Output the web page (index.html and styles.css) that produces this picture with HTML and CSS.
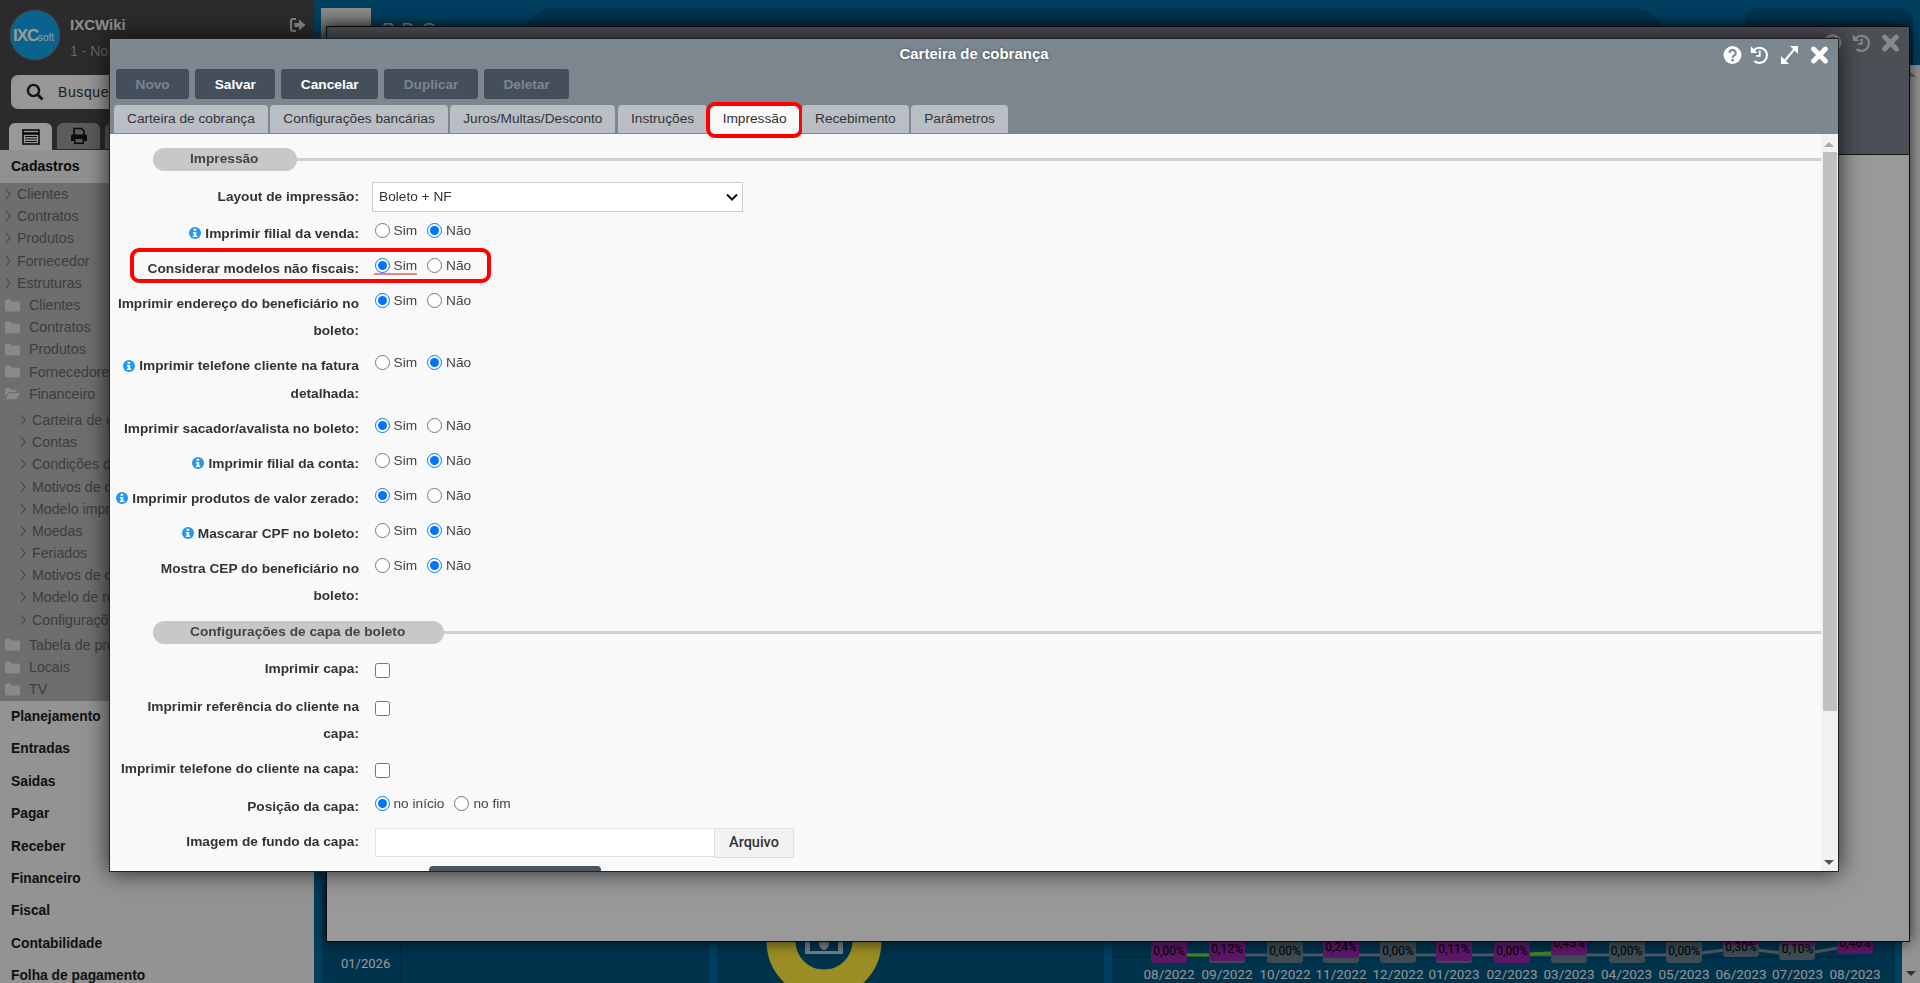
FILE: index.html
```html
<!DOCTYPE html>
<html lang="pt-BR">
<head>
    <meta charset="UTF-8">
    <title>IXCWiki</title>
    <link rel="stylesheet" href="styles.css">
</head>
<body>
    <svg class="icon-defs" width="0" height="0">
        <symbol id="i-info" viewBox="0 0 12 12">
            <circle cx="6" cy="6" r="6" fill="#2196f3"/>
            <rect x="4.6" y="1.8" width="2.6" height="2" fill="#fff"/>
            <path d="M3.9 5h3.3v3.6h1v1.4H3.9V8.6h1V6.4h-1z" fill="#fff"/>
        </symbol>
        <symbol id="i-angle" viewBox="0 0 6 12">
            <path d="M1 1l4 5-4 5" fill="none" stroke="currentColor" stroke-width="1.2"/>
        </symbol>
        <symbol id="i-folder" viewBox="0 0 15 13">
            <path d="M0 2q0-1.500 1.500-1.500h3.500l1.500 2h7q1.500 0 1.500 1.500v7q0 1.500-1.500 1.500h-12q-1.500 0-1.500-1.500z" fill="currentColor"/>
        </symbol>
        <symbol id="i-folder-open" viewBox="0 0 16 13">
            <path d="M0 2q0-1.500 1.500-1.500h3l1.500 2h5q1.500 0 1.500 1.500v.8H4L0 10z" fill="currentColor"/>
            <path d="M4.500 6h11.500l-3.500 6.500H0.800z" fill="currentColor"/>
        </symbol>
        <symbol id="i-question" viewBox="0 0 18 18">
            <circle cx="9" cy="9" r="8.500" fill="currentColor"/>
            <path d="M6.200 7a2.900 2.900 0 1 1 4.500 2.400c-1 .7-1.600 1.100-1.600 2.200" fill="none" stroke="#7d8790" stroke-width="2.100"/>
            <rect x="7.900" y="12.600" width="2.400" height="2.400" fill="#7d8790"/>
        </symbol>
        <symbol id="i-history" viewBox="0 0 18 18">
            <path d="M3.800 4.200A7.200 7.200 0 1 1 4.200 14.800" fill="none" stroke="currentColor" stroke-width="2"/>
            <path d="M0.800 0.800l6.200 6.200H0.800z" fill="currentColor"/>
            <path d="M9.200 4.800v5h-3.400" fill="none" stroke="currentColor" stroke-width="1.800"/>
        </symbol>
        <symbol id="i-expand" viewBox="0 0 18 20">
            <path d="M3.500 16.500L14.500 3.500" fill="none" stroke="currentColor" stroke-width="2"/>
            <path d="M9.500 1h8v8zM0.500 11v8h8z" fill="currentColor"/>
        </symbol>
        <symbol id="i-close" viewBox="0 0 16 16">
            <path d="M3 3l10 10M13 3L3 13" fill="none" stroke="currentColor" stroke-width="4.200" stroke-linecap="round"/>
        </symbol>
    </svg>

    <!-- sidebar -->
    <aside class="sidebar">
        <div class="brand">
            <svg class="logo" width="52" height="52" viewBox="0 0 52 52">
                <circle cx="26" cy="26" r="25" fill="#10a6ea" stroke="#6d6d6d"/>
                <text class="logo-a" x="4" y="32">IXC</text>
                <text class="logo-b" x="29" y="32">soft</text>
            </svg>
            <div class="brand-text">
                <strong>IXCWiki</strong>
                <small>1 - Nome</small>
            </div>
            <svg class="exit" width="16" height="14" viewBox="0 0 16 14">
                <path d="M6 1H3Q1 1 1 3v8q0 2 2 2h3" fill="none" stroke="currentColor" stroke-width="2"/>
                <path d="M4.500 5H9V1.500L15.500 7 9 12.500V9H4.500z" fill="currentColor"/>
            </svg>
        </div>
        <div class="search">
            <svg width="18" height="18" viewBox="0 0 18 18">
                <circle cx="7.500" cy="7.500" r="5.600" fill="none" stroke="#222" stroke-width="2.400"/>
                <path d="M11.500 11.500l5 5" stroke="#222" stroke-width="3"/>
            </svg>
            <span>Busque</span>
        </div>
        <div class="side-tabs">
            <div class="side-tab active">
                <svg width="18" height="16" viewBox="0 0 18 16">
                    <rect x="1" y="1" width="16" height="14" fill="none" stroke="#111" stroke-width="1.600"/>
                    <path d="M1 4.500h16" stroke="#111" stroke-width="2.500"/>
                    <path d="M3 7.500h12M3 10h12M3 12.500h12" stroke="#111"/>
                </svg>
            </div>
            <div class="side-tab">
                <svg width="18" height="18" viewBox="0 0 18 18">
                    <path d="M4 8V1.500h7.500L14 4v4" fill="none" stroke="#111" stroke-width="1.600"/>
                    <path d="M1 9q0-1.500 1.500-1.500h13Q17 7.500 17 9v5h-3v3H4v-3H1z" fill="#111"/>
                    <rect x="5.500" y="12" width="7" height="3.500" fill="#999"/>
                </svg>
            </div>
            <div class="side-tab"></div>
        </div>

        <div class="menu-head">Cadastros</div>
        <div class="tree">
            <div class="tree-row"><svg class="angle"><use href="#i-angle"/></svg>Clientes</div>
            <div class="tree-row"><svg class="angle"><use href="#i-angle"/></svg>Contratos</div>
            <div class="tree-row"><svg class="angle"><use href="#i-angle"/></svg>Produtos</div>
            <div class="tree-row"><svg class="angle"><use href="#i-angle"/></svg>Fornecedor</div>
            <div class="tree-row"><svg class="angle"><use href="#i-angle"/></svg>Estruturas</div>
            <div class="tree-row"><svg class="folder"><use href="#i-folder"/></svg>Clientes</div>
            <div class="tree-row"><svg class="folder"><use href="#i-folder"/></svg>Contratos</div>
            <div class="tree-row"><svg class="folder"><use href="#i-folder"/></svg>Produtos</div>
            <div class="tree-row"><svg class="folder"><use href="#i-folder"/></svg>Fornecedores</div>
            <div class="tree-row"><svg class="folder"><use href="#i-folder-open"/></svg>Financeiro</div>
            <div class="tree-sub">
                <div class="tree-row"><svg class="angle"><use href="#i-angle"/></svg>Carteira de c</div>
                <div class="tree-row"><svg class="angle"><use href="#i-angle"/></svg>Contas</div>
                <div class="tree-row"><svg class="angle"><use href="#i-angle"/></svg>Condições d</div>
                <div class="tree-row"><svg class="angle"><use href="#i-angle"/></svg>Motivos de d</div>
                <div class="tree-row"><svg class="angle"><use href="#i-angle"/></svg>Modelo impre</div>
                <div class="tree-row"><svg class="angle"><use href="#i-angle"/></svg>Moedas</div>
                <div class="tree-row"><svg class="angle"><use href="#i-angle"/></svg>Feriados</div>
                <div class="tree-row"><svg class="angle"><use href="#i-angle"/></svg>Motivos de c</div>
                <div class="tree-row"><svg class="angle"><use href="#i-angle"/></svg>Modelo de re</div>
                <div class="tree-row"><svg class="angle"><use href="#i-angle"/></svg>Configuraçõ</div>
            </div>
            <div class="tree-row"><svg class="folder"><use href="#i-folder"/></svg>Tabela de pre</div>
            <div class="tree-row"><svg class="folder"><use href="#i-folder"/></svg>Locais</div>
            <div class="tree-row"><svg class="folder"><use href="#i-folder"/></svg>TV</div>
        </div>
        <div class="menu-list">
            <div>Planejamento</div>
            <div>Entradas</div>
            <div>Saidas</div>
            <div>Pagar</div>
            <div>Receber</div>
            <div>Financeiro</div>
            <div>Fiscal</div>
            <div>Contabilidade</div>
            <div>Folha de pagamento</div>
        </div>
    </aside>

    <!-- dashboard behind the windows -->
    <main class="dash">
        <div class="dash-top">
            <div class="avatar"></div>
            <div class="dash-title">P B O</div>
            <div class="dash-card wide"></div>
            <div class="dash-card small"></div>
        </div>
        <div class="panels">
            <div class="panel panel-date">
                <span class="date">01/2026</span>
                <span class="divider"></span>
            </div>
            <div class="panel panel-donut">
                <svg width="387" height="100" viewBox="0 0 387 100">
                    <circle cx="107" cy="58" r="43" fill="none" stroke="#ffeb3b" stroke-width="29"/>
                    <rect x="88" y="40" width="38" height="31" fill="#c2d2dd"/>
                    <circle cx="107" cy="58" r="7" fill="#00557f"/>
                    <rect x="93" y="40" width="28" height="28" fill="#00557f"/>
                    <ellipse cx="107" cy="60" rx="5" ry="7" fill="#c2d2dd"/>
                </svg>
            </div>
            <div class="panel panel-chart">
                <svg class="chart" width="783" height="60" viewBox="1112 923 783 60">
                    <path d="M1112 957H1856" stroke="#00304a"/>
                    <path d="M1169 955H1684L1741 948 1797 955 1855 945" fill="none" stroke="#7c94a2" stroke-width="3"/>
                    <path d="M1169 955H1227M1512 955L1569 952" stroke="#6be232" stroke-width="3"/>
                    <path d="M1741 938L1797 934 1855 934" fill="none" stroke="#9c27b0" stroke-width="3"/>

                    <rect class="p-grey" x="1209" y="939" width="36" height="24" rx="3"/>
                    <rect class="p-grey" x="1323" y="939" width="36" height="24" rx="3"/>
                    <rect class="p-grey" x="1436" y="939" width="36" height="24" rx="3"/>
                    <rect class="p-grey" x="1551" y="939" width="36" height="24" rx="3"/>

                    <rect class="p-purple" x="1151" y="939" width="36" height="24" rx="3"/>
                    <rect class="p-purple" x="1209" y="937" width="36" height="24" rx="3"/>
                    <rect class="p-grey" x="1267" y="939" width="36" height="24" rx="3"/>
                    <rect class="p-purple" x="1323" y="935" width="36" height="23" rx="3"/>
                    <rect class="p-grey" x="1380" y="939" width="36" height="24" rx="3"/>
                    <rect class="p-purple" x="1436" y="937" width="36" height="24" rx="3"/>
                    <rect class="p-purple" x="1494" y="939" width="36" height="24" rx="3"/>
                    <rect class="p-purple" x="1551" y="931" width="36" height="24" rx="3"/>
                    <rect class="p-grey" x="1609" y="939" width="36" height="24" rx="3"/>
                    <rect class="p-grey" x="1666" y="939" width="36" height="24" rx="3"/>
                    <rect class="p-grey" x="1723" y="933" width="36" height="24" rx="3"/>
                    <rect class="p-purple" x="1723" y="925" width="36" height="20" rx="3"/>
                    <rect class="p-grey" x="1779" y="937" width="36" height="23" rx="3"/>
                    <rect class="p-purple" x="1779" y="925" width="36" height="20" rx="3"/>
                    <rect class="p-purple" x="1837" y="930" width="36" height="24" rx="3"/>

                    <g class="pct">
                        <text x="1169" y="955">0,00%</text>
                        <text x="1227" y="953">0,12%</text>
                        <text x="1285" y="955">0,00%</text>
                        <text x="1341" y="951">0,24%</text>
                        <text x="1398" y="955">0,00%</text>
                        <text x="1454" y="953">0,11%</text>
                        <text x="1512" y="955">0,00%</text>
                        <text x="1569" y="947">0,45%</text>
                        <text x="1626.500" y="955">0,00%</text>
                        <text x="1684" y="955">0,00%</text>
                        <text x="1741" y="951">0,30%</text>
                        <text x="1797.500" y="953">0,10%</text>
                        <text x="1855" y="947">0,46%</text>
                    </g>
                    <g class="month">
                        <text x="1169" y="979">08/2022</text>
                        <text x="1227" y="979">09/2022</text>
                        <text x="1285" y="979">10/2022</text>
                        <text x="1341" y="979">11/2022</text>
                        <text x="1398" y="979">12/2022</text>
                        <text x="1454" y="979">01/2023</text>
                        <text x="1512" y="979">02/2023</text>
                        <text x="1569" y="979">03/2023</text>
                        <text x="1626.500" y="979">04/2023</text>
                        <text x="1684" y="979">05/2023</text>
                        <text x="1741" y="979">06/2023</text>
                        <text x="1797.500" y="979">07/2023</text>
                        <text x="1855" y="979">08/2023</text>
                    </g>
                </svg>
            </div>
        </div>
        <div class="page-scroll">
            <span class="arrow-up"></span>
            <span class="arrow-down"></span>
        </div>
    </main>

    <!-- first window, dimmed -->
    <div class="back-window">
        <div class="back-head">
            <div class="back-title">Carteira de cobrança</div>
            <div class="back-icons">
                <svg class="ic"><use href="#i-question"/></svg>
                <svg class="ic"><use href="#i-history"/></svg>
                <svg class="ic"><use href="#i-close"/></svg>
            </div>
        </div>
    </div>

    <div class="overlay"></div>

    <!-- active window -->
    <section class="modal">
        <header class="modal-head">
            <div class="modal-title">Carteira de cobrança</div>
            <div class="modal-icons">
                <svg class="ic ic-first"><use href="#i-question"/></svg>
                <svg class="ic"><use href="#i-history"/></svg>
                <svg class="ic"><use href="#i-expand"/></svg>
                <svg class="ic"><use href="#i-close"/></svg>
            </div>
            <div class="toolbar">
                <button class="btn" disabled>Novo</button>
                <button class="btn">Salvar</button>
                <button class="btn">Cancelar</button>
                <button class="btn" disabled>Duplicar</button>
                <button class="btn" disabled>Deletar</button>
            </div>
            <div class="tabs">
                <div class="tab">Carteira de cobrança</div>
                <div class="tab">Configurações bancárias</div>
                <div class="tab">Juros/Multas/Desconto</div>
                <div class="tab">Instruções</div>
                <div class="tab active">Impressão<span class="mark"></span></div>
                <div class="tab">Recebimento</div>
                <div class="tab">Parâmetros</div>
            </div>
        </header>

        <div class="modal-body">
            <div class="section"><span>Impressão</span></div>

            <div class="row row-tall row-select">
                <label class="lbl">Layout de impressão:</label>
                <select class="select"><option>Boleto + NF</option></select>
            </div>
            <div class="row">
                <label class="lbl"><svg class="info"><use href="#i-info"/></svg>Imprimir filial da venda:</label>
                <div class="opts">
                    <label class="opt"><input type="radio" name="r1">Sim</label>
                    <label class="opt"><input type="radio" name="r1" checked>Não</label>
                </div>
            </div>
            <div class="row row-marked">
                <span class="mark"></span>
                <label class="lbl">Considerar modelos não fiscais:</label>
                <div class="opts">
                    <label class="opt focus"><input type="radio" name="r2" checked>Sim</label>
                    <label class="opt"><input type="radio" name="r2">Não</label>
                </div>
            </div>
            <div class="row">
                <label class="lbl">Imprimir endereço do beneficiário no boleto:</label>
                <div class="opts">
                    <label class="opt"><input type="radio" name="r3" checked>Sim</label>
                    <label class="opt"><input type="radio" name="r3">Não</label>
                </div>
            </div>
            <div class="row">
                <label class="lbl"><svg class="info"><use href="#i-info"/></svg>Imprimir telefone cliente na fatura detalhada:</label>
                <div class="opts">
                    <label class="opt"><input type="radio" name="r4">Sim</label>
                    <label class="opt"><input type="radio" name="r4" checked>Não</label>
                </div>
            </div>
            <div class="row">
                <label class="lbl">Imprimir sacador/avalista no boleto:</label>
                <div class="opts">
                    <label class="opt"><input type="radio" name="r5" checked>Sim</label>
                    <label class="opt"><input type="radio" name="r5">Não</label>
                </div>
            </div>
            <div class="row">
                <label class="lbl"><svg class="info"><use href="#i-info"/></svg>Imprimir filial da conta:</label>
                <div class="opts">
                    <label class="opt"><input type="radio" name="r6">Sim</label>
                    <label class="opt"><input type="radio" name="r6" checked>Não</label>
                </div>
            </div>
            <div class="row">
                <label class="lbl"><svg class="info"><use href="#i-info"/></svg>Imprimir produtos de valor zerado:</label>
                <div class="opts">
                    <label class="opt"><input type="radio" name="r7" checked>Sim</label>
                    <label class="opt"><input type="radio" name="r7">Não</label>
                </div>
            </div>
            <div class="row">
                <label class="lbl"><svg class="info"><use href="#i-info"/></svg>Mascarar CPF no boleto:</label>
                <div class="opts">
                    <label class="opt"><input type="radio" name="r8">Sim</label>
                    <label class="opt"><input type="radio" name="r8" checked>Não</label>
                </div>
            </div>
            <div class="row">
                <label class="lbl">Mostra CEP do beneficiário no boleto:</label>
                <div class="opts">
                    <label class="opt"><input type="radio" name="r9">Sim</label>
                    <label class="opt"><input type="radio" name="r9" checked>Não</label>
                </div>
            </div>

            <div class="section section-next"><span>Configurações de capa de boleto</span></div>

            <div class="row row-tall">
                <label class="lbl">Imprimir capa:</label>
                <input class="check" type="checkbox">
            </div>
            <div class="row">
                <label class="lbl">Imprimir referência do cliente na capa:</label>
                <input class="check" type="checkbox">
            </div>
            <div class="row row-tall">
                <label class="lbl">Imprimir telefone do cliente na capa:</label>
                <input class="check" type="checkbox">
            </div>
            <div class="row">
                <label class="lbl">Posição da capa:</label>
                <div class="opts">
                    <label class="opt"><input type="radio" name="r10" checked>no início</label>
                    <label class="opt"><input type="radio" name="r10">no fim</label>
                </div>
            </div>
            <div class="row row-file">
                <label class="lbl">Imagem de fundo da capa:</label>
                <div class="file">
                    <input class="file-name" type="text">
                    <button class="file-btn">Arquivo</button>
                </div>
            </div>
            <div class="next-peek"></div>

            <div class="scroll">
                <span class="arrow-up"></span>
                <span class="thumb"></span>
                <span class="arrow-down"></span>
            </div>
        </div>
    </section>
</body>
</html>
```

FILE: styles.css
```css
* {
    margin: 0;
    padding: 0;
    box-sizing: border-box;
}

html, body {
    width: 1920px;
    height: 983px;
    overflow: hidden;
}

body {
    display: flex;
    position: relative;
    font-family: 'Liberation Sans', Arial, sans-serif;
    font-size: 13.700px;
    color: #333;
    background: #00557f;
}

.icon-defs {
    position: absolute;
}

/* sidebar */
.sidebar {
    width: 314px;
    flex: none;
    height: 983px;
    overflow: hidden;
    background: #484848;
}

.brand {
    display: flex;
    height: 75px;
    padding: 9px 0 0 9px;
}

.logo-a {
    font: bold 17px 'Liberation Sans', sans-serif;
    letter-spacing: -1px;
    fill: #fff;
}

.logo-b {
    font: 10px 'Liberation Sans', sans-serif;
    fill: #fff;
}

.brand-text {
    width: 220px;
    margin-left: 9px;
    display: flex;
    flex-direction: column;
    gap: 10px;
    padding-top: 7px;
    white-space: nowrap;
}

.brand-text strong {
    font-size: 15px;
    color: #eee;
}

.brand-text small {
    font-size: 14px;
    color: #aaa;
}

.exit {
    margin-top: 9px;
    color: #ddd;
}

.search {
    display: flex;
    align-items: center;
    gap: 14px;
    height: 34px;
    margin-left: 11px;
    padding-left: 15px;
    background: #fcfcfc;
    border-radius: 7px;
    font-size: 14px;
    letter-spacing: 0.6px;
    color: #333;
}

.side-tabs {
    display: flex;
    gap: 5px;
    margin: 14px 0 0 9px;
}

.side-tab {
    width: 43px;
    height: 26px;
    display: flex;
    align-items: center;
    justify-content: center;
    background: #989898;
    border-radius: 6px 6px 0 0;
}

.side-tab.active {
    height: 27px;
    background: #fff;
}

.menu-head {
    height: 33px;
    line-height: 32px;
    padding-left: 11px;
    font-size: 14px;
    font-weight: bold;
    color: #111;
    background: #f2f2f2;
}

.tree {
    height: 518px;
    background: #b8b8b8;
}

.tree-row {
    display: flex;
    align-items: center;
    height: 22.200px;
    white-space: nowrap;
    color: #666;
    font-size: 14.200px;
}

.tree-row svg {
    flex: none;
    color: #777;
}

.angle {
    width: 6px;
    height: 12px;
    margin: 0 6px 0 5px;
}

.folder {
    width: 15px;
    height: 13px;
    margin: 0 9px 0 5px;
    color: #e4e4e4 !important;
}

.tree-sub {
    margin: 4px 0 3px 15px;
}

.menu-list {
    padding: 0 0 0 11px;
    background: #f6f6f6;
    height: 300px;
}

.menu-list div {
    height: 32.400px;
    line-height: 32.400px;
    font-size: 13.800px;
    font-weight: bold;
    color: #1c1c1c;
}

/* dashboard */
.dash {
    flex: 1;
    height: 983px;
    position: relative;
    overflow: hidden;
    display: flex;
    flex-direction: column;
    justify-content: space-between;
    background: #006aa0;
}

.dash-top {
    display: flex;
    padding: 8px 0 0 7px;
}

.avatar {
    width: 50px;
    height: 50px;
    flex: none;
    background: linear-gradient(#e8e8e8, #888);
}

.dash-title {
    width: 142px;
    margin: 11px 0 0 11px;
    font-size: 19px;
    letter-spacing: 1px;
    color: #dfeaf2;
}

.dash-card {
    height: 100px;
    background: linear-gradient(#005a88, #002b42);
}

.wide {
    width: 1140px;
    border-radius: 30px;
}

.small {
    width: 168px;
    margin-left: 81px;
    border-radius: 12px;
}

.panels {
    display: flex;
    gap: 8px;
    height: 100px;
    padding: 0 25px 0 8px;
}

.panel {
    position: relative;
    height: 100px;
    background: #00557f;
}

.panel-date {
    width: 387px;
}

.date {
    position: absolute;
    left: 19px;
    bottom: 12px;
    font-family: Roboto, sans-serif;
    font-size: 13px;
    color: #fff;
}

.divider {
    position: absolute;
    left: 78px;
    top: 0;
    bottom: 0;
    border-left: 1px solid #00496d;
}

.panel-donut {
    width: 387px;
}

.panel-chart {
    width: 783px;
    display: flex;
    align-items: flex-end;
}

.p-grey {
    fill: #657f8e;
}

.p-purple {
    fill: #9c27b0;
}

.pct text {
    font: 12px Roboto, sans-serif;
    text-anchor: middle;
    fill: #000;
}

.month text {
    font: 13.500px Roboto, sans-serif;
    text-anchor: middle;
    fill: #f4f8fa;
}

.page-scroll {
    position: absolute;
    right: 0;
    top: 65px;
    bottom: 0;
    width: 18px;
    background: #f6f6f6;
}

.page-scroll .arrow-up {
    position: absolute;
    left: 4px;
    top: 7px;
}

.page-scroll .arrow-down {
    position: absolute;
    left: 4px;
    bottom: 7px;
}

.arrow-up {
    width: 0;
    height: 0;
    border: 5px solid transparent;
    border-top: 0;
    border-bottom: 5px solid #aaa;
}

.arrow-down {
    width: 0;
    height: 0;
    border: 5px solid transparent;
    border-bottom: 0;
    border-top: 5px solid #555;
}

/* windows */
.back-window {
    position: absolute;
    left: 326px;
    top: 26px;
    width: 1584px;
    height: 916px;
    border: 1px solid #111;
    background: #fff;
    box-shadow: 0 0 14px rgba(0,0,0,0.7);
}

.back-head {
    position: relative;
    height: 128px;
    background: #7d8490;
    border-bottom: 1px solid #222;
}

.back-title {
    padding-top: 9px;
    text-align: center;
    font-size: 15px;
    font-weight: bold;
    color: #fff;
}

.back-icons {
    position: absolute;
    top: 6px;
    right: 9px;
    display: flex;
    gap: 10px;
    color: #e4e4e4;
}

.ic {
    width: 19px;
    height: 20px;
    flex: none;
}

.overlay {
    position: absolute;
    inset: 0;
    background: rgba(0,0,0,0.4);
    backdrop-filter: blur(0.7px);
}

.modal {
    position: absolute;
    left: 109px;
    top: 38px;
    width: 1730px;
    height: 834px;
    display: flex;
    flex-direction: column;
    border: 1px solid #222;
    background: #f9f9f9;
    box-shadow: 0 0 22px rgba(0,0,0,0.75);
}

.modal-head {
    position: relative;
    flex: none;
    height: 95px;
    padding: 30px 0 0 6px;
    background: #7d8790;
}

.modal-title {
    position: absolute;
    left: 0;
    right: 0;
    top: 6px;
    text-align: center;
    font-size: 15px;
    font-weight: bold;
    color: #fff;
    text-shadow: 0 0 3px rgba(0,0,0,0.5);
}

.modal-icons {
    position: absolute;
    top: 6px;
    right: 9px;
    display: flex;
    gap: 11px;
    color: #fff;
}

.ic-first {
    margin-right: -3px;
}

.toolbar {
    display: flex;
    gap: 6px;
}

.btn {
    height: 30px;
    padding: 0 19.500px;
    border: 0;
    border-radius: 3px;
    background: #454f5b;
    font: bold 13.700px 'Liberation Sans', sans-serif;
    color: #fff;
}

.btn:disabled {
    color: #7a8591;
}

.tabs {
    display: flex;
    gap: 2.500px;
    margin: 6px 0 0 -2px;
}

.tab {
    position: relative;
    height: 28px;
    line-height: 28px;
    padding: 0 13px;
    border-radius: 4px 4px 0 0;
    background: #b9bec5;
    color: #333;
    white-space: nowrap;
}

.tab.active {
    height: 29px;
    background: #f9f9f9;
}

.mark {
    position: absolute;
    border: 4px solid #f00;
    border-radius: 9px;
    pointer-events: none;
}

.tab .mark {
    inset: -3px -3.500px -4px;
}

/* form */
.modal-body {
    position: relative;
    flex: 1;
    overflow: hidden;
    padding: 14px 17px 0 5px;
}

.section {
    position: relative;
    height: 23px;
    margin: 0 0 10px 38px;
}

.section::before {
    content: "";
    position: absolute;
    left: 100px;
    right: 0;
    top: 9.500px;
    height: 3px;
    background: #d0d0d0;
}

.section span {
    position: relative;
    display: inline-block;
    height: 23px;
    line-height: 22px;
    padding: 0 38.500px 0 37px;
    border-radius: 12px;
    background: #c8c8c8;
    font-weight: bold;
    color: #444;
}

.section-next {
    margin-top: 11.500px;
}

.row {
    position: relative;
    display: flex;
    margin-bottom: 7px;
}

.row-tall {
    min-height: 31px;
}

.row-select .lbl {
    padding-top: 1.500px;
}

.lbl {
    width: 244px;
    flex: none;
    margin-right: 15.500px;
    padding-top: 0.500px;
    text-align: right;
    font-weight: bold;
    line-height: 27.500px;
    color: #333;
}

.info {
    width: 12px;
    height: 12px;
    margin-right: 4px;
    vertical-align: -1.500px;
}

.select {
    appearance: none;
    width: 371px;
    height: 30px;
    margin: 0.500px 0 0 -2.500px;
    padding-left: 6px;
    border: 1px solid #ccc;
    border-radius: 0;
    background: #fff url("data:image/svg+xml,%3Csvg xmlns='http://www.w3.org/2000/svg' width='12' height='8'%3E%3Cpath d='M1 1.500l5 5 5-5' fill='none' stroke='%23111' stroke-width='2'/%3E%3C/svg%3E") no-repeat right 4px center;
    font: 13.700px 'Liberation Sans', sans-serif;
    color: #333;
}

.opts {
    display: flex;
    gap: 10px;
    height: 22px;
}

.opt {
    display: flex;
    align-items: center;
    gap: 4px;
    color: #444;
}

.opt input {
    width: 15px;
    height: 15px;
    margin: 0;
}

.focus {
    align-self: flex-start;
    height: 21px;
    padding: 3px 0 0 1px;
    margin-left: -1px;
    border-bottom: 2px solid #ee8080;
}

.row-marked .mark {
    left: 15px;
    top: -6px;
    width: 361px;
    height: 35px;
}

.check {
    width: 15px;
    height: 15px;
    margin-top: 8.500px;
}

.file {
    display: flex;
    height: 30px;
    align-items: flex-start;
    margin-left: 0.500px;
}

.file-name {
    width: 339px;
    height: 29px;
    border: 1px solid #e2e2e2;
    border-right: 0;
    background: #fff;
}

.file-btn {
    width: 80px;
    height: 30px;
    border: 1px solid #e0e0e0;
    background: #f2f2f2;
    font: 500 14.500px Roboto, sans-serif;
    color: #333;
}

.next-peek {
    width: 172px;
    height: 10px;
    margin: 8px 0 0 314px;
    border-radius: 4px 4px 0 0;
    background: #4a5560;
}

.scroll {
    position: absolute;
    top: 0;
    right: 0;
    bottom: 0;
    width: 17px;
    background: #f1f1f1;
}

.scroll .arrow-up {
    position: absolute;
    left: 3px;
    top: 8px;
}

.scroll .arrow-down {
    position: absolute;
    left: 3px;
    bottom: 6px;
}

.thumb {
    position: absolute;
    top: 18px;
    left: 2px;
    width: 14px;
    height: 559px;
    background: #c1c1c1;
}
```
